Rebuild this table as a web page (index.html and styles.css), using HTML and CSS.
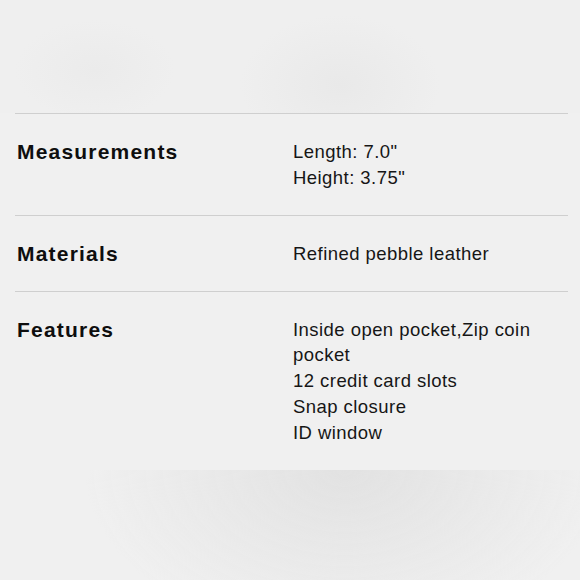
FILE: index.html
```html
<!DOCTYPE html>
<html>
<head>
<meta charset="utf-8">
<link rel="stylesheet" href="styles.css">
</head>
<body>
<div class="page">
  <div class="hero"></div>
  <div class="specs">
    <div class="row">
      <div class="label">Measurements</div>
      <div class="value">Length: 7.0"<br>Height: 3.75"</div>
    </div>
    <div class="row">
      <div class="label">Materials</div>
      <div class="value">Refined pebble leather</div>
    </div>
    <div class="row last">
      <div class="label">Features</div>
      <div class="value">Inside open pocket,Zip coin pocket<br>12 credit card slots<br>Snap closure<br>ID window</div>
    </div>
  </div>
  <div class="foot"></div>
</div>
</body>
</html>
```
FILE: styles.css
```css
html, body {
  margin: 0;
  padding: 0;
  background: #f0f0f0;
}
.page {
  width: 580px;
  height: 580px;
  overflow: hidden;
  display: flex;
  flex-direction: column;
  font-family: "Liberation Sans", Arial, sans-serif;
}
.hero {
  height: 113px;
  flex: none;
  background:
    radial-gradient(ellipse 80px 50px at 95px 70px, #ebebeb, rgba(239,239,239,0) 100%),
    radial-gradient(ellipse 100px 70px at 340px 85px, #e9e9e9, rgba(239,239,239,0) 100%),
    #efefef;
}
.specs {
  margin: 0 12px 0 15px;
  border-top: 1px solid #cfcfcf;
}
.row {
  display: grid;
  grid-template-columns: 276px 1fr;
  padding: 25px 0 24px 2px;
  border-bottom: 1px solid #cfcfcf;
}
.row.last {
  border-bottom: none;
  padding-bottom: 24px;
}
.label {
  font-size: 21px;
  font-weight: bold;
  letter-spacing: 1.2px;
  color: #0e0e0e;
  line-height: 26px;
}
.value {
  font-size: 18.5px;
  letter-spacing: 0.45px;
  color: #161616;
  line-height: 25.8px;
  width: 250px;
}
.foot {
  flex: 1;
  background:
    radial-gradient(ellipse 260px 170px at 345px 0px, #e2e2e2, rgba(240,240,240,0) 100%),
    #f0f0f0;
}
```
